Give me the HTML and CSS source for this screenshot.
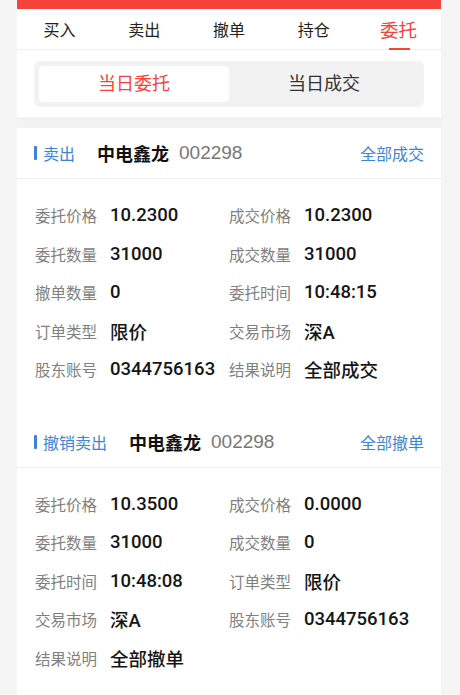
FILE: index.html
```html
<!DOCTYPE html>
<html lang="zh-CN">
<head>
    <meta charset="UTF-8">
    <meta name="viewport" content="width=device-width, initial-scale=1.0">
    <title>委托</title>
    <link rel="stylesheet" href="styles.css">
</head>
<body>
    <div class="page">
        <div class="topbar"></div>
        <nav class="tabs">
            <a class="tab">买入</a>
            <a class="tab">卖出</a>
            <a class="tab">撤单</a>
            <a class="tab">持仓</a>
            <a class="tab active">委托</a>
        </nav>
        <div class="segment-wrap">
            <div class="segment">
                <div class="seg-item active">当日委托</div>
                <div class="seg-item">当日成交</div>
            </div>
        </div>
        <div class="divider"></div>

        <div class="order">
            <div class="order-head">
                <span class="order-type">卖出</span>
                <span class="stock-name">中电鑫龙</span>
                <span class="stock-code">002298</span>
                <span class="order-status">全部成交</span>
            </div>
            <div class="order-body">
                <div class="field"><span class="label">委托价格</span><span class="value">10.2300</span></div>
                <div class="field"><span class="label">成交价格</span><span class="value">10.2300</span></div>
                <div class="field"><span class="label">委托数量</span><span class="value">31000</span></div>
                <div class="field"><span class="label">成交数量</span><span class="value">31000</span></div>
                <div class="field"><span class="label">撤单数量</span><span class="value">0</span></div>
                <div class="field"><span class="label">委托时间</span><span class="value">10:48:15</span></div>
                <div class="field"><span class="label">订单类型</span><span class="value">限价</span></div>
                <div class="field"><span class="label">交易市场</span><span class="value">深A</span></div>
                <div class="field"><span class="label">股东账号</span><span class="value">0344756163</span></div>
                <div class="field"><span class="label">结果说明</span><span class="value">全部成交</span></div>
            </div>
        </div>

        <div class="order">
            <div class="order-head">
                <span class="order-type">撤销卖出</span>
                <span class="stock-name">中电鑫龙</span>
                <span class="stock-code">002298</span>
                <span class="order-status">全部撤单</span>
            </div>
            <div class="order-body">
                <div class="field"><span class="label">委托价格</span><span class="value">10.3500</span></div>
                <div class="field"><span class="label">成交价格</span><span class="value">0.0000</span></div>
                <div class="field"><span class="label">委托数量</span><span class="value">31000</span></div>
                <div class="field"><span class="label">成交数量</span><span class="value">0</span></div>
                <div class="field"><span class="label">委托时间</span><span class="value">10:48:08</span></div>
                <div class="field"><span class="label">订单类型</span><span class="value">限价</span></div>
                <div class="field"><span class="label">交易市场</span><span class="value">深A</span></div>
                <div class="field"><span class="label">股东账号</span><span class="value">0344756163</span></div>
                <div class="field"><span class="label">结果说明</span><span class="value">全部撤单</span></div>
            </div>
        </div>
    </div>
</body>
</html>
```

FILE: styles.css
```css
body {
    margin: 0;
    background-color: #f5f5f5;
    font-family: "Liberation Sans", "Noto Sans CJK SC", sans-serif;
    color: #222;
}
.page {
    width: 424px;
    margin-left: 17px;
    min-height: 695px;
    background: #fff;
}
.topbar {
    height: 9px;
    background-color: #f6433a;
}
.tabs {
    display: flex;
    height: 40px;
    border-bottom: 1px solid #efefef;
}
.tab {
    flex: 1;
    position: relative;
    display: flex;
    align-items: center;
    justify-content: center;
    font-size: 16px;
    color: #222;
}
.tab.active {
    font-size: 18.5px;
    color: #f6433a;
}
.tab.active::after {
    content: "";
    position: absolute;
    bottom: -1px;
    left: 50%;
    width: 21px;
    height: 2px;
    margin-left: -10px;
    background-color: #f6433a;
}
.segment-wrap {
    padding: 11px 17px 10px;
}
.segment {
    display: flex;
    padding: 5px;
    border-radius: 6px;
    background-color: #f2f2f2;
}
.seg-item {
    flex: 1;
    height: 36px;
    line-height: 36px;
    text-align: center;
    font-size: 18px;
    color: #333;
}
.seg-item.active {
    background: #fff;
    border-radius: 4px;
    color: #f6433a;
}
.divider {
    height: 11px;
    background-color: #f2f2f2;
}
.order-head {
    display: flex;
    align-items: center;
    height: 50px;
    padding: 0 17px;
    border-bottom: 1px solid #efefef;
}
.order-type {
    display: flex;
    align-items: center;
    font-size: 16px;
    color: #3a85d6;
}
.order-type::before {
    content: "";
    width: 3px;
    height: 14px;
    margin-right: 6px;
    border-radius: 1px;
    background-color: #3a85d6;
}
.stock-name {
    margin-left: 22px;
    font-size: 18px;
    font-weight: bold;
    color: #111;
}
.stock-code {
    margin-left: 10px;
    font-size: 19px;
    color: #777;
}
.order-status {
    margin-left: auto;
    font-size: 16px;
    color: #3a85d6;
}
.order-body {
    display: grid;
    grid-template-columns: 194px 194px;
    padding: 17px 0 28px 18px;
}
.field {
    display: flex;
    align-items: center;
    height: 38.5px;
    white-space: nowrap;
}
.label {
    width: 75px;
    font-size: 15.5px;
    color: #808080;
}
.value {
    font-family: Roboto, "Noto Sans CJK SC", sans-serif;
    font-size: 18.5px;
    font-weight: 500;
    color: #151515;
}
```
